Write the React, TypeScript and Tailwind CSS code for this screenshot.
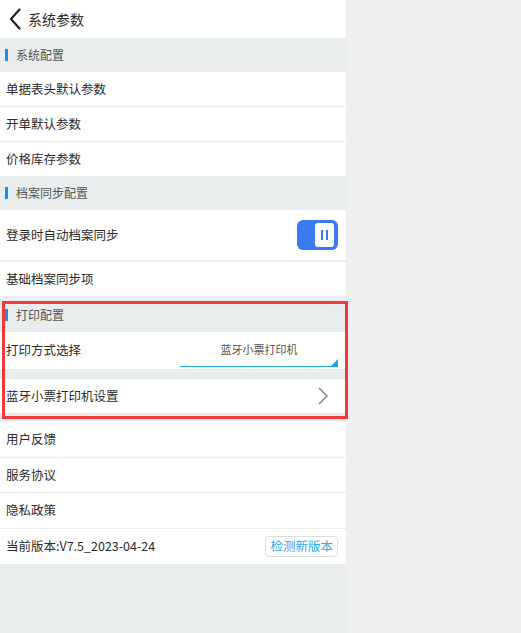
import React from 'react';

const font = { fontFamily: '"Noto Sans CJK SC", "Noto Sans", sans-serif' };

const SectionTitle = ({ title }: { title: string }) => (
  <div className="flex h-[34px] items-center bg-[#e9edee] pl-[5px]">
    <span className="h-[12px] w-[3px] bg-[#1b8ff0]" />
    <span className="ml-[8px] text-[12px] text-[#555555]">{title}</span>
  </div>
);

const Row = ({
  label,
  className = 'h-[34px] pr-[8px]',
  children,
}: {
  label: string;
  className?: string;
  children?: React.ReactNode;
}) => (
  <div className={`flex items-center justify-between bg-white pl-[6px] ${className}`}>
    <span className="text-[12.5px] text-[#2b2b2b]">{label}</span>
    {children}
  </div>
);

const Toggle = () => (
  <div className="flex h-[30px] w-[41px] items-center justify-end rounded-[6px] bg-[#3a7af3] pr-[4px]">
    <div className="flex h-[24px] w-[19px] items-center justify-center gap-[3px] rounded-[3px] bg-white">
      <span className="h-[10px] w-[2px] bg-[#3a7af3]" />
      <span className="h-[10px] w-[2px] bg-[#3a7af3]" />
    </div>
  </div>
);

const PrintSelect = () => (
  <div className="relative mb-[2px] flex w-[158px] items-center justify-center self-stretch border-b border-[#1fa5e8]">
    <span className="text-[11px] text-[#555555]">蓝牙小票打印机</span>
    <span className="absolute bottom-0 right-0 h-0 w-0 border-b-[7px] border-l-[7px] border-b-[#1fa5e8] border-l-transparent" />
  </div>
);

export default function App() {
  return (
    <div className="flex min-h-[633px] bg-[#efefef]" style={font}>
      <div className="relative flex w-[346px] flex-col bg-[#e9edee]">
        <div className="flex h-[38px] items-center bg-white pl-[8px]">
          <svg width="14" height="22" viewBox="0 0 14 22" fill="none">
            <path d="M11.5 1.5L3 11l8.5 9.5" stroke="#222" strokeWidth="2.2" strokeLinecap="round" strokeLinejoin="round" />
          </svg>
          <span className="ml-[6px] text-[14px] text-[#2b2b2b]">系统参数</span>
        </div>

        <SectionTitle title="系统配置" />
        <div className="flex flex-col gap-px">
          <Row label="单据表头默认参数" />
          <Row label="开单默认参数" />
          <Row label="价格库存参数" />
        </div>

        <SectionTitle title="档案同步配置" />
        <div className="flex flex-col gap-[2px]">
          <Row label="登录时自动档案同步" className="h-[50px] pr-[8px]">
            <Toggle />
          </Row>
          <Row label="基础档案同步项" />
        </div>

        <div className="mt-[2px]">
          <SectionTitle title="打印配置" />
        </div>
        <Row label="打印方式选择" className="h-[37px] pr-[8px]">
          <PrintSelect />
        </Row>
        <div className="mt-[10px]">
          <Row label="蓝牙小票打印机设置" className="h-[34px] pr-[17px]">
            <svg width="12" height="18" viewBox="0 0 12 18" fill="none">
              <path d="M2.5 1.5L10 9l-7.5 7.5" stroke="#888" strokeWidth="1.6" strokeLinecap="round" strokeLinejoin="round" />
            </svg>
          </Row>
        </div>

        <div className="mt-[9px] flex flex-col gap-px">
          <Row label="用户反馈" className="h-[35px] pr-[8px]" />
          <Row label="服务协议" className="h-[34px] pr-[8px]" />
          <Row label="隐私政策" className="h-[35px] pr-[8px]" />
          <Row label="当前版本:V7.5_2023-04-24" className="h-[35px] pr-[8px]">
            <button
              type="button"
              className="flex h-[21px] items-center rounded-[4px] border border-[#dddddd] px-[4px] text-[12.5px] text-[#2fa8ee]"
            >
              检测新版本
            </button>
          </Row>
        </div>

        <div className="pointer-events-none absolute left-[2px] top-[301px] h-[118px] w-[346px] border-[3px] border-[#f23a3a]" />
      </div>
    </div>
  );
}
